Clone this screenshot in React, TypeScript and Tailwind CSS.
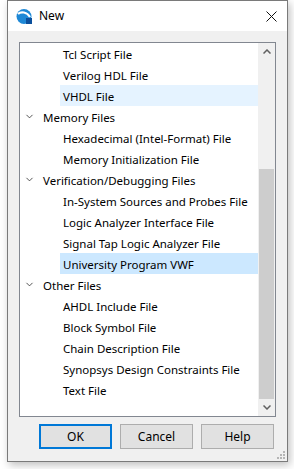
import { ChevronDown } from "lucide-react";

type Row = { label: string; group?: boolean; state?: "hover" | "selected" };

const ROWS: Row[] = [
  { label: "Tcl Script File" },
  { label: "Verilog HDL File" },
  { label: "VHDL File", state: "hover" },
  { label: "Memory Files", group: true },
  { label: "Hexadecimal (Intel-Format) File" },
  { label: "Memory Initialization File" },
  { label: "Verification/Debugging Files", group: true },
  { label: "In-System Sources and Probes File" },
  { label: "Logic Analyzer Interface File" },
  { label: "Signal Tap Logic Analyzer File" },
  { label: "University Program VWF", state: "selected" },
  { label: "Other Files", group: true },
  { label: "AHDL Include File" },
  { label: "Block Symbol File" },
  { label: "Chain Description File" },
  { label: "Synopsys Design Constraints File" },
  { label: "Text File" },
];

function AppIcon() {
  return (
    <svg width="17" height="17" viewBox="0 0 17 17">
      <circle cx="8" cy="8.5" r="7.5" fill="#1e88d6" />
      <path d="M2 6 C5 3, 11 4, 14 9" stroke="#fff" strokeWidth="2.2" fill="none" />
      <rect x="10" y="10" width="6" height="6" fill="#0b4f9c" />
    </svg>
  );
}

function Button({ label, primary }: { label: string; primary?: boolean }) {
  return (
    <button
      className={
        "w-[73px] h-[25px] bg-[#e1e1e1] text-[12px] text-black " +
        (primary ? "border-2 border-[#0078d7]" : "border border-[#adadad]")
      }
    >
      {label}
    </button>
  );
}

export default function App() {
  return (
    <div className="w-[294px] h-[469px] bg-white font-['Noto_Sans',sans-serif] text-black">
      <div className="ml-[7px] w-[281px] h-[462px] border border-[#7a7a7a] bg-[#f0f0f0] flex flex-col shadow-[2px_3px_8px_rgba(0,0,0,0.25)]">
        {/* title bar */}
        <div className="h-[30px] bg-white flex items-center pl-[8px] pr-[10px]">
          <AppIcon />
          <span className="ml-[6px] text-[12px] leading-none">New</span>
          <svg className="ml-auto" width="11" height="11" viewBox="0 0 11 11">
            <path d="M0.5 0.5 L10.5 10.5 M10.5 0.5 L0.5 10.5" stroke="#111" strokeWidth="1" />
          </svg>
        </div>

        {/* list */}
        <div className="mt-[11px] ml-[11px] w-[257px] h-[375px] border border-[#828790] bg-white flex">
          <div className="flex-1 overflow-hidden">
            {ROWS.map((r) => (
              <div key={r.label} className="h-[21px] flex items-center text-[11.5px] whitespace-nowrap">
                {r.group ? (
                  <>
                    <ChevronDown className="ml-[4px] w-[11px] h-[11px] text-[#333]" strokeWidth={1.8} />
                    <span className="ml-[8px] pt-[2px]">{r.label}</span>
                  </>
                ) : (
                  <div
                    className={
                      "ml-[40px] flex-1 h-full flex items-center pl-[3px] pt-[2px] " +
                      (r.state === "hover" ? "bg-[#e5f3ff]" : r.state === "selected" ? "bg-[#cce8ff]" : "")
                    }
                  >
                    {r.label}
                  </div>
                )}
              </div>
            ))}
          </div>
          {/* scrollbar */}
          <div className="w-[17px] bg-[#f0f0f0] flex flex-col">
            <div className="h-[17px] flex items-center justify-center">
              <svg width="8" height="5" viewBox="0 0 8 5">
                <path d="M0.5 4.5 L4 1 L7.5 4.5" stroke="#606060" strokeWidth="1.5" fill="none" />
              </svg>
            </div>
            <div className="flex-1 flex flex-col">
              <div className="h-[109px]" />
              <div className="flex-1 bg-[#cdcdcd] mx-[1px]" />
            </div>
            <div className="h-[17px] flex items-center justify-center">
              <svg width="8" height="5" viewBox="0 0 8 5">
                <path d="M0.5 0.5 L4 4 L7.5 0.5" stroke="#606060" strokeWidth="1.5" fill="none" />
              </svg>
            </div>
          </div>
        </div>

        {/* buttons */}
        <div className="mt-[7px] ml-[31px] flex gap-[8px]">
          <Button label="OK" primary />
          <Button label="Cancel" />
          <Button label="Help" />
        </div>

        <div className="mt-auto self-end mr-[2px] mb-[2px] grid grid-cols-3 gap-[1px] w-[8px]">
          {[0, 0, 1, 0, 1, 1, 1, 1, 1].map((v, i) => (
            <div key={i} className={"w-[2px] h-[2px] " + (v ? "bg-[#b5b5b5]" : "")} />
          ))}
        </div>
      </div>
    </div>
  );
}
